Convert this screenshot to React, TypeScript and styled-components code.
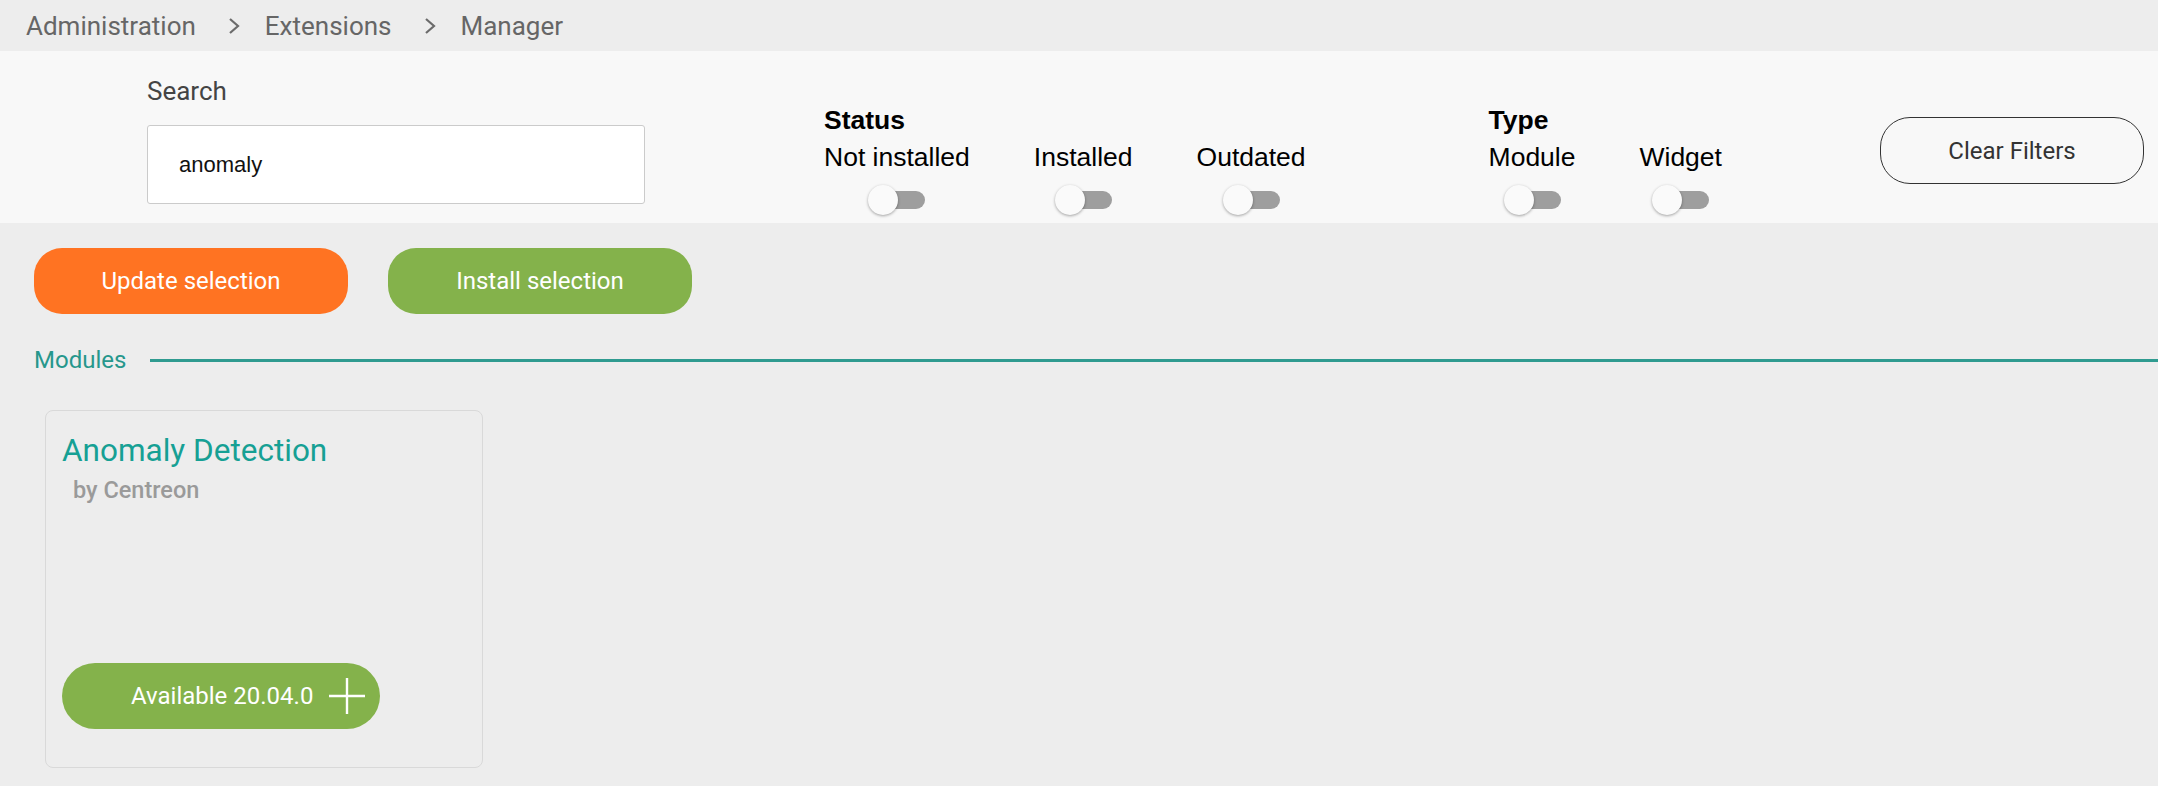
import styled, { createGlobalStyle } from 'styled-components'

const GlobalStyle = createGlobalStyle`
  html, body {
    margin: 0;
    padding: 0;
    background: #ededed;
    font-family: Roboto, "Liberation Sans", sans-serif;
  }
  * { box-sizing: border-box; }
`

const statusFilters = ['Not installed', 'Installed', 'Outdated']
const typeFilters = ['Module', 'Widget']

const Chevron = () => (
  <Separator width="12" height="18" viewBox="0 0 12 18">
    <path d="M2 2 L10 9 L2 16" fill="none" stroke="#6b6b6b" strokeWidth="2.2" />
  </Separator>
)

const Toggle = () => (
  <Switch>
    <Track />
    <Thumb />
  </Switch>
)

const App = () => {
  return (
    <Page>
      <GlobalStyle />
      <Breadcrumb>
        <Crumb>Administration</Crumb>
        <Chevron />
        <Crumb>Extensions</Crumb>
        <Chevron />
        <Crumb>Manager</Crumb>
      </Breadcrumb>

      <FilterPanel>
        <SearchGroup>
          <SearchLabel>Search</SearchLabel>
          <SearchInput defaultValue="anomaly" />
        </SearchGroup>

        <FilterGroup $offset={179}>
          <GroupTitle>Status</GroupTitle>
          <Options>
            {statusFilters.map((f) => (
              <Option key={f}>
                <OptionLabel>{f}</OptionLabel>
                <Toggle />
              </Option>
            ))}
          </Options>
        </FilterGroup>

        <FilterGroup $offset={183}>
          <GroupTitle>Type</GroupTitle>
          <Options>
            {typeFilters.map((f) => (
              <Option key={f}>
                <OptionLabel>{f}</OptionLabel>
                <Toggle />
              </Option>
            ))}
          </Options>
        </FilterGroup>

        <ClearButton>Clear Filters</ClearButton>
      </FilterPanel>

      <Actions>
        <ActionButton $color="#ff7322" $width={314}>Update selection</ActionButton>
        <ActionButton $color="#84b24b" $width={304}>Install selection</ActionButton>
      </Actions>

      <SectionHeader>
        <SectionTitle>Modules</SectionTitle>
        <SectionLine />
      </SectionHeader>

      <Cards>
        <Card>
          <CardTitle>Anomaly Detection</CardTitle>
          <CardAuthor>by Centreon</CardAuthor>
          <AvailableButton>
            Available 20.04.0
            <svg width="38" height="38" viewBox="0 0 38 38">
              <path d="M19 1 V37 M1 19 H37" stroke="#fff" strokeWidth="2.4" />
            </svg>
          </AvailableButton>
        </Card>
      </Cards>
    </Page>
  )
}

export default App

const Page = styled.div`
  min-height: 786px;
  background: #ededed;
`
const Breadcrumb = styled.nav`
  height: 51px;
  display: flex;
  align-items: center;
  padding-left: 26px;
  background: #ededed;
`
const Separator = styled.svg`
  margin: 0 25px 0 32px;
`
const Crumb = styled.span`
  font-size: 26px;
  color: #666;
  line-height: 1;
`
const FilterPanel = styled.section`
  height: 172px;
  display: flex;
  align-items: flex-start;
  padding-left: 147px;
  background: #f8f8f8;
`
const SearchGroup = styled.div`
  margin-top: 26px;
  width: 498px;
`
const SearchLabel = styled.div`
  font-size: 26px;
  line-height: 28px;
  color: #444;
`
const SearchInput = styled.input`
  display: block;
  margin-top: 20px;
  width: 100%;
  height: 79px;
  border: 1.5px solid #cbcbcb;
  border-radius: 3px;
  background: #fff;
  padding-left: 31px;
  font-family: "Liberation Sans", Arial, sans-serif;
  font-size: 22px;
  color: #111;
  outline: none;
`
const FilterGroup = styled.div<{ $offset: number }>`
  margin-left: ${(p) => p.$offset}px;
  margin-top: 54px;
  font-family: "Liberation Sans", Arial, sans-serif;
`
const GroupTitle = styled.div`
  font-weight: bold;
  font-size: 26.5px;
  line-height: 30px;
  color: #000;
`
const Options = styled.div`
  display: flex;
  gap: 64px;
  margin-top: 7px;
`
const Option = styled.div`
  display: flex;
  flex-direction: column;
  align-items: center;
`
const OptionLabel = styled.div`
  font-size: 26.5px;
  line-height: 30px;
  color: #000;
`
const Switch = styled.div`
  position: relative;
  width: 57px;
  height: 30px;
  margin-top: 13px;
`
const Track = styled.div`
  position: absolute;
  left: 9px;
  top: 6px;
  width: 48px;
  height: 18px;
  border-radius: 9px;
  background: #9e9e9e;
`
const Thumb = styled.div`
  position: absolute;
  left: 0;
  top: 0;
  width: 30px;
  height: 30px;
  border-radius: 50%;
  background: #fafafa;
  box-shadow: 0 1px 3px rgba(0, 0, 0, 0.35);
`
const ClearButton = styled.button`
  margin-left: auto;
  margin-right: 14px;
  margin-top: 66px;
  width: 264px;
  height: 67px;
  border: 1.5px solid #333;
  border-radius: 30px;
  background: transparent;
  font-family: Roboto, sans-serif;
  font-size: 24px;
  color: #333;
`
const Actions = styled.div`
  display: flex;
  gap: 40px;
  padding: 25px 0 0 34px;
`
const ActionButton = styled.button<{ $color: string; $width: number }>`
  width: ${(p) => p.$width}px;
  height: 66px;
  border: none;
  border-radius: 28px;
  background: ${(p) => p.$color};
  color: #fff;
  font-family: Roboto, sans-serif;
  font-size: 24px;
`
const SectionHeader = styled.div`
  display: flex;
  align-items: center;
  gap: 24px;
  margin-top: 33px;
  padding-left: 34px;
`
const SectionTitle = styled.span`
  font-size: 24px;
  line-height: 26px;
  color: #26978c;
`
const SectionLine = styled.div`
  flex: 1;
  height: 3px;
  background: #2f9b90;
`
const Cards = styled.div`
  display: flex;
  padding: 37px 0 0 45px;
`
const Card = styled.article`
  width: 438px;
  height: 358px;
  display: flex;
  flex-direction: column;
  align-items: flex-start;
  padding: 22px 0 0 16px;
  border: 1.5px solid #d9d9d9;
  border-radius: 8px;
`
const CardTitle = styled.h2`
  margin: 0;
  font-size: 31.5px;
  font-weight: 400;
  line-height: 36px;
  color: #16a094;
`
const CardAuthor = styled.div`
  margin: 8px 0 0 11px;
  font-size: 23.5px;
  font-weight: 500;
  line-height: 26px;
  color: #9a9a9a;
`
const AvailableButton = styled.button`
  margin-top: auto;
  margin-bottom: 38px;
  width: 318px;
  height: 66px;
  display: flex;
  align-items: center;
  gap: 15px;
  padding: 0 0 0 69px;
  border: none;
  border-radius: 33px;
  background: #84b24b;
  color: #fff;
  font-family: Roboto, sans-serif;
  font-size: 24px;
`
